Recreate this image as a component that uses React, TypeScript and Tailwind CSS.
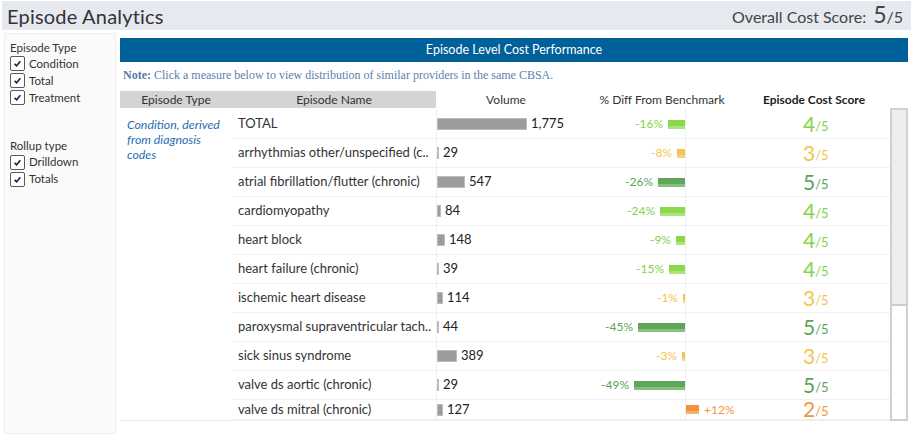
import React from "react";

type Row = {
  name: string;
  volume: number;
  diff: number;
  score: number;
};

const rows: Row[] = [
  { name: "TOTAL", volume: 1775, diff: -16, score: 4 },
  { name: "arrhythmias other/unspecified (c..", volume: 29, diff: -8, score: 3 },
  { name: "atrial fibrillation/flutter (chronic)", volume: 547, diff: -26, score: 5 },
  { name: "cardiomyopathy", volume: 84, diff: -24, score: 4 },
  { name: "heart block", volume: 148, diff: -9, score: 4 },
  { name: "heart failure (chronic)", volume: 39, diff: -15, score: 4 },
  { name: "ischemic heart disease", volume: 114, diff: -1, score: 3 },
  { name: "paroxysmal supraventricular tach..", volume: 44, diff: -45, score: 5 },
  { name: "sick sinus syndrome", volume: 389, diff: -3, score: 3 },
  { name: "valve ds aortic (chronic)", volume: 29, diff: -49, score: 5 },
  { name: "valve ds mitral (chronic)", volume: 127, diff: 12, score: 2 },
];

// colour per score: text, bar, lower stripe of bar
const scoreColors: Record<number, { text: string; bar: string; stripe: string }> = {
  5: { text: "text-[#5aa55a]", bar: "bg-[#5fa65a]", stripe: "border-[#86c07e]" },
  4: { text: "text-[#84d348]", bar: "bg-[#8ad94b]", stripe: "border-[#a9e47c]" },
  3: { text: "text-[#efc64c]", bar: "bg-[#efc64f]", stripe: "border-[#f4d67f]" },
  2: { text: "text-[#f1963c]", bar: "bg-[#f0933b]", stripe: "border-[#f5b06c]" },
};

const Checkbox = ({ label }: { label: string }) => (
  <div className="flex items-center h-[17px] gap-[4px]">
    <div className="w-[15px] h-[15px] border border-[#5a5a5a] rounded-[2px] bg-white flex items-center justify-center">
      <svg width="9" height="9" viewBox="0 0 10 10">
        <path d="M1.8 5.4 L4 7.6 L8.2 2.4" fill="none" stroke="#222" strokeWidth="1.7" />
      </svg>
    </div>
    <span className="text-[11.5px] text-[#333]">{label}</span>
  </div>
);

const DiffCell = ({ diff, score }: { diff: number; score: number }) => {
  const c = scoreColors[score];
  const w = Math.max(2, Math.round(Math.abs(diff) * 1.05));
  const label = diff > 0 ? `+${diff}%` : `${diff}%`;
  const bar = (
    <div className={`h-[9px] ${c.bar} border-b-[3px] ${c.stripe}`} style={{ width: w }} />
  );
  return (
    <div className="flex w-[180px] h-full">
      <div className="w-[105px] flex items-center justify-end gap-[5px]">
        {diff < 0 && (
          <>
            <span className={`text-[12px] ${c.text}`}>{label}</span>
            {bar}
          </>
        )}
      </div>
      <div className="flex-1 flex items-center gap-[5px] border-l border-dotted border-[#e4e4e4]">
        {diff > 0 && (
          <>
            {bar}
            <span className={`text-[12px] ${c.text}`}>{label}</span>
          </>
        )}
      </div>
    </div>
  );
};

export default function App() {
  return (
    <div
      className="w-[913px] h-[443px] bg-white overflow-hidden text-[#333]"
      style={{ fontFamily: "Lato, 'Open Sans', sans-serif" }}
    >
      {/* title bar */}
      <div className="mx-[2px] mt-[1px] h-[29px] bg-[#e6e9f0] flex items-center justify-between pl-[5px] pr-[8px]">
        <span className="text-[20px] text-[#333] tracking-[0.2px]">Episode Analytics</span>
        <div className="flex items-baseline text-[#444]">
          <span className="text-[16px] mr-[7px]">Overall Cost Score:</span>
          <span className="text-[23px] leading-none">5</span>
          <span className="text-[16px]">/5</span>
        </div>
      </div>

      <div className="flex mt-[3px]">
        {/* filters */}
        <div className="ml-[4px] w-[112px] h-[401px] bg-[#fafafa] border border-[#eeeeee] pl-[5px] pt-[5px]">
          <div className="text-[11.5px] text-[#333] -mb-[1px]">Episode Type</div>
          <Checkbox label="Condition" />
          <Checkbox label="Total" />
          <Checkbox label="Treatment" />
          <div className="text-[11.5px] text-[#333] mt-[31px] -mb-[1px]">Rollup type</div>
          <Checkbox label="Drilldown" />
          <Checkbox label="Totals" />
        </div>

        {/* main */}
        <div className="ml-[4px] w-[788px] pt-[5px]">
          <div className="h-[24px] bg-[#00609a] flex items-center justify-center text-white text-[12.5px]">
            Episode Level Cost Performance
          </div>
          <div
            className="h-[26px] flex items-center pl-[3px] text-[12px] text-[#5b7fae]"
            style={{ fontFamily: "'Liberation Serif', serif" }}
          >
            <span className="font-bold text-[#567aa8] mr-[3px]">Note:</span>
            Click a measure below to view distribution of similar providers in the same CBSA.
          </div>

          {/* column headers */}
          <div className="flex h-[17px] text-[12px] text-[#333] mt-[3px]">
            <div className="w-[316px] bg-[#d4d4d4] flex">
              <div className="w-[112px] flex items-center justify-center">Episode Type</div>
              <div className="flex-1 flex items-center justify-center">Episode Name</div>
            </div>
            <div className="w-[140px] flex items-center justify-center">Volume</div>
            <div className="w-[172px] flex items-center justify-center">% Diff From Benchmark</div>
            <div className="w-[132px] flex items-center justify-center font-bold text-[#222]">
              Episode Cost Score
            </div>
          </div>

          {/* body */}
          <div className="flex h-[311px] mt-[2px] border-b border-[#eeeeee] w-[770px]">
            <div className="w-[112px] pl-[7px] pt-[7px] text-[12.3px] italic text-[#1f6db0] leading-[15px]">
              Condition, derived
              <br />
              from diagnosis
              <br />
              codes
            </div>
            <div className="w-[658px] overflow-hidden">
              {rows.map((r, i) => {
                const c = scoreColors[r.score];
                const vw = Math.max(2, Math.round(r.volume * 0.0507));
                const last = i === rows.length - 1;
                return (
                  <div
                    key={r.name}
                    className={`flex shrink-0 border-b border-[#f0f0f0] ${last ? "h-[20px]" : "h-[29px]"}`}
                  >
                    <div className="w-[204px] pl-[6px] flex items-center text-[13px] text-[#333] whitespace-nowrap overflow-hidden">
                      {r.name}
                    </div>
                    <div className="w-[144px] flex items-center gap-[4px] border-l border-dotted border-[#e4e4e4]">
                      <div
                        className="h-[12px] bg-[#9b9b9b] border border-[#bdbdbd]"
                        style={{ width: vw }}
                      />
                      <span className="text-[13px] text-[#222]">{r.volume.toLocaleString("en-US")}</span>
                    </div>
                    <DiffCell diff={r.diff} score={r.score} />
                    <div className={`flex-1 flex items-end pl-[43px] ${last ? "pb-0" : "pb-[4px]"}`}>
                      <span className={`text-[21px] leading-none ${c.text}`}>{r.score}</span>
                      <span className={`text-[13px] leading-none mb-[1px] ${c.text}`}>/5</span>
                    </div>
                  </div>
                );
              })}
            </div>
          </div>
        </div>

        {/* scrollbar */}
        <div className="absolute left-[890px] top-[108px] w-[18px] h-[313px] border-2 border-[#d0d0d0] bg-white">
          <div className="h-[196px] bg-[#eeeeee] border-b-2 border-[#cccccc]" />
        </div>
      </div>
    </div>
  );
}
